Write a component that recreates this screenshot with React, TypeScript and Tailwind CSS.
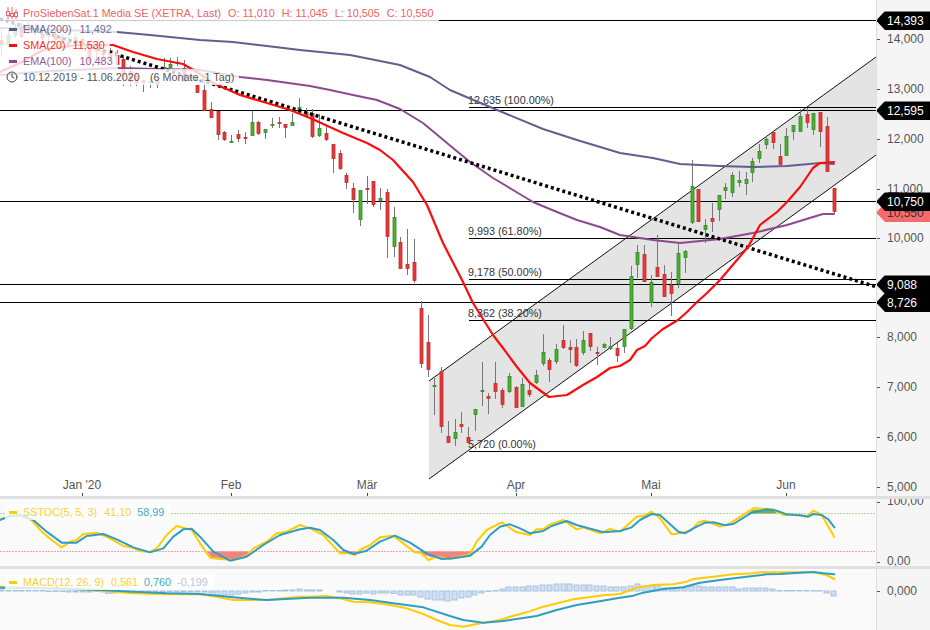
import { Clock } from "lucide-react";

type Candle = [number, number, number, number, number, "r" | "g"];
type Pt = [number, number];

// x, wick top, wick bottom, body top, body bottom, colour (pixel values read off the chart)
const candles: Candle[] = [
  [1, 30, 57, 40, 45, "r"], [8, 30, 46, 35, 45, "g"], [15, 24, 38, 30, 36, "g"], [21, 22, 38, 26, 37, "r"],
  [28, 22, 34, 26, 31, "r"], [35, 24, 36, 28, 33, "g"], [42, 26, 40, 33, 38, "r"], [48, 28, 42, 32, 36, "g"],
  [55, 30, 44, 34, 40, "r"], [62, 34, 46, 37, 42, "r"], [68, 36, 48, 42, 46, "g"], [75, 34, 46, 37, 42, "g"],
  [82, 36, 50, 39, 44, "r"], [89, 42, 64, 47, 62, "r"], [96, 44, 60, 48, 52, "g"], [103, 48, 62, 50, 55, "r"],
  [110, 48, 60, 50, 57, "r"], [117, 50, 66, 55, 65, "r"], [123, 56, 86, 59, 76, "r"], [130, 66, 86, 71, 82, "r"],
  [136, 72, 86, 75, 83, "r"], [143, 80, 92, 80, 83, "r"], [150, 78, 88, 81, 83, "g"], [157, 76, 88, 80, 85, "r"],
  [164, 58, 70, 67, 69, "g"], [170, 58, 70, 64, 68, "g"], [177, 57, 66, 62, 64, "r"], [184, 60, 82, 68, 82, "r"],
  [197, 85, 93, 85, 93, "r"], [204, 80, 111, 90, 111, "r"], [211, 102, 118, 109, 118, "r"],
  [218, 111, 140, 111, 135, "r"], [224, 131, 141, 132, 140, "r"], [231, 135, 143, 141, 142, "g"],
  [238, 130, 142, 134, 139, "r"], [245, 132, 144, 137, 139, "r"], [252, 111, 136, 122, 136, "g"],
  [258, 121, 135, 122, 134, "r"], [265, 129, 139, 129, 133, "g"], [272, 118, 128, 124, 126, "g"],
  [279, 117, 128, 122, 124, "r"], [285, 124, 138, 124, 128, "r"], [292, 113, 126, 122, 126, "g"],
  [299, 98, 113, 107, 113, "g"], [306, 108, 118, 112, 116, "r"], [312, 109, 138, 113, 137, "r"],
  [319, 114, 137, 128, 136, "g"], [326, 125, 141, 133, 140, "r"], [333, 144, 173, 144, 159, "r"],
  [340, 150, 170, 153, 169, "r"], [346, 173, 189, 175, 183, "r"], [353, 183, 213, 188, 200, "r"],
  [360, 190, 226, 190, 220, "g"], [367, 176, 204, 188, 190, "r"], [373, 181, 207, 181, 205, "r"],
  [380, 188, 210, 198, 201, "g"], [387, 189, 258, 192, 237, "r"], [394, 207, 257, 217, 247, "g"],
  [400, 237, 269, 242, 269, "r"], [407, 229, 275, 264, 269, "r"], [414, 239, 283, 262, 281, "r"],
  [421, 301, 368, 308, 364, "r"], [428, 315, 377, 342, 370, "r"], [434, 378, 415, 385, 387, "g"],
  [441, 367, 433, 371, 427, "r"], [448, 421, 443, 436, 443, "r"], [455, 419, 446, 432, 439, "g"],
  [461, 412, 433, 424, 427, "r"], [468, 427, 443, 437, 443, "r"], [475, 409, 431, 409, 415, "g"],
  [482, 362, 406, 390, 392, "g"], [488, 393, 414, 396, 399, "r"], [495, 362, 399, 383, 392, "r"],
  [502, 388, 408, 390, 405, "r"], [509, 373, 393, 376, 392, "g"], [516, 386, 408, 387, 408, "r"],
  [522, 378, 407, 384, 407, "g"], [529, 383, 397, 390, 395, "r"], [536, 370, 384, 375, 383, "g"],
  [543, 334, 366, 352, 364, "g"], [549, 358, 382, 360, 370, "r"], [556, 344, 364, 349, 362, "g"],
  [563, 325, 349, 340, 348, "r"], [570, 340, 363, 347, 350, "r"], [576, 339, 367, 347, 366, "r"],
  [583, 331, 355, 340, 353, "g"], [590, 333, 351, 333, 347, "r"], [597, 347, 365, 352, 354, "r"],
  [604, 343, 348, 344, 348, "g"], [610, 337, 350, 346, 349, "g"], [617, 343, 362, 348, 356, "r"],
  [624, 329, 353, 329, 347, "g"], [631, 266, 330, 276, 329, "g"], [637, 245, 278, 252, 265, "g"],
  [644, 245, 282, 254, 282, "r"], [651, 275, 307, 282, 303, "g"], [657, 235, 277, 267, 277, "r"],
  [664, 265, 297, 274, 297, "r"], [671, 272, 316, 285, 294, "r"], [678, 244, 288, 253, 284, "g"],
  [685, 250, 273, 251, 258, "g"], [692, 160, 224, 186, 223, "g"], [698, 189, 222, 189, 222, "r"],
  [705, 219, 243, 225, 230, "g"], [712, 203, 232, 218, 222, "r"], [719, 195, 221, 195, 210, "g"],
  [725, 183, 199, 187, 191, "g"], [732, 172, 197, 175, 193, "g"], [739, 171, 187, 180, 183, "g"],
  [746, 172, 195, 179, 184, "g"], [752, 158, 182, 161, 173, "g"], [759, 144, 163, 151, 159, "g"],
  [766, 136, 149, 139, 145, "g"], [773, 131, 149, 132, 143, "r"], [780, 144, 165, 156, 165, "r"],
  [786, 128, 156, 136, 156, "g"], [793, 126, 140, 125, 132, "g"], [800, 109, 132, 116, 132, "g"],
  [807, 108, 128, 114, 123, "r"], [813, 113, 135, 113, 130, "g"], [820, 112, 147, 112, 132, "r"],
  [827, 117, 172, 126, 172, "r"], [834, 188, 213, 188, 212, "r"],
];

const ema200: Pt[] = [
  [0, 28], [60, 30], [117, 32], [150, 35], [200, 40], [233, 42], [267, 46], [300, 50], [350, 55], [400, 65],
  [430, 77], [450, 90], [490, 107], [543, 129], [577, 140], [620, 153], [653, 158], [680, 164], [720, 166],
  [753, 167], [787, 166], [820, 163], [834, 164],
];
const ema100: Pt[] = [
  [0, 75], [50, 71], [117, 68], [200, 70], [240, 77], [267, 80], [310, 86], [330, 90], [353, 95], [377, 100],
  [400, 109], [423, 123], [453, 148], [470, 162], [493, 178], [513, 190], [533, 202], [557, 212], [577, 220],
  [600, 227], [620, 235], [653, 240], [680, 243], [720, 239], [753, 233], [787, 225], [813, 217], [823, 214],
  [834, 214],
];
const sma20: Pt[] = [
  [0, 72], [20, 63], [43, 50], [77, 45], [113, 45], [133, 52], [157, 59], [183, 64], [197, 72], [213, 83],
  [240, 95], [267, 103], [290, 110], [310, 118], [343, 133], [367, 143], [380, 150], [393, 160], [413, 182],
  [427, 205], [443, 243], [462, 280], [473, 303], [493, 335], [503, 348], [517, 367], [530, 383], [549, 397],
  [567, 395], [583, 385], [597, 377], [610, 368], [620, 366], [630, 360], [637, 350], [645, 346], [652, 338],
  [663, 329], [678, 320], [687, 312], [697, 302], [707, 293], [720, 280], [748, 247], [760, 225], [777, 212],
  [787, 202], [800, 187], [813, 168], [820, 163], [834, 162],
];

// lower panels were read in 3x crops, so their points stay in crop units
const crop = (ox: number, oy: number, pts: Pt[]): Pt[] => pts.map(([x, y]) => [ox + x / 3, oy + y / 3]);

const stocYellow = [
  ...crop(0, 490, [[0, 88], [30, 80], [60, 78], [95, 90], [125, 125], [155, 150], [185, 172], [210, 155], [230, 150], [250, 132], [290, 128], [330, 145], [370, 168], [395, 172], [420, 183], [450, 186], [470, 175], [500, 135], [530, 108], [575, 120], [600, 160], [630, 203], [660, 207], [700, 210], [740, 197], [760, 175], [800, 155], [830, 130], [860, 125], [900, 105], [930, 115]]),
  ...crop(310, 490, [[40, 135], [90, 190], [120, 190], [135, 195], [150, 180], [180, 165], [210, 142], [250, 137], [280, 160], [315, 187], [335, 190], [355, 210], [380, 200], [420, 207], [460, 197], [480, 192], [500, 155], [530, 120], [575, 97], [620, 127], [660, 135], [680, 118], [700, 118], [720, 103], [760, 90], [800, 118], [820, 112], [870, 130], [900, 117], [930, 125]]),
  ...crop(620, 490, [[50, 80], [70, 78], [95, 65], [120, 85], [155, 133], [190, 128], [215, 120], [235, 97], [255, 92], [300, 110], [330, 100], [400, 55], [460, 58], [490, 75], [540, 75], [560, 80], [580, 62], [605, 75], [625, 110], [643, 140]]),
];
const stocBlue = [
  ...crop(0, 490, [[0, 90], [30, 78], [60, 75], [100, 90], [140, 125], [185, 158], [230, 158], [260, 138], [310, 132], [350, 148], [400, 172], [450, 187], [490, 175], [520, 140], [550, 118], [575, 116], [600, 140], [640, 185], [690, 212], [740, 200], [790, 165], [840, 135], [900, 118], [930, 113]]),
  ...crop(310, 490, [[30, 120], [70, 150], [100, 180], [130, 192], [170, 182], [210, 155], [255, 137], [300, 158], [350, 190], [395, 207], [430, 205], [480, 197], [515, 170], [540, 135], [570, 110], [600, 103], [630, 115], [660, 130], [700, 123], [725, 108], [770, 93], [800, 105], [880, 127], [930, 123]]),
  ...crop(620, 490, [[35, 112], [60, 90], [95, 72], [120, 75], [175, 125], [195, 130], [220, 115], [255, 98], [280, 97], [315, 106], [340, 102], [395, 68], [440, 58], [470, 62], [500, 73], [550, 77], [565, 80], [580, 72], [605, 75], [625, 88], [643, 112]]),
];
const macdYellow = [
  ...crop(0, 490, [[0, 290], [50, 292], [200, 295], [300, 302], [400, 310], [500, 313], [600, 313], [650, 320], [700, 330], [800, 330], [900, 320], [930, 320]]),
  ...crop(310, 490, [[50, 318], [90, 325], [130, 335], [180, 337], [240, 345], [290, 355], [340, 372], [380, 390], [420, 405], [460, 410], [500, 402], [570, 390], [600, 380], [650, 367], [700, 350], [790, 328], [880, 316], [930, 312]]),
  ...crop(620, 490, [[50, 293], [100, 285], [160, 283], [200, 275], [220, 267], [280, 260], [340, 253], [400, 250], [420, 247], [580, 247], [620, 255], [643, 267]]),
];
const macdBlue = [
  ...crop(0, 490, [[0, 293], [100, 295], [200, 297], [300, 300], [400, 305], [500, 310], [600, 312], [700, 322], [800, 330], [930, 323]]),
  ...crop(310, 490, [[100, 323], [180, 330], [250, 340], [340, 352], [420, 378], [460, 390], [520, 398], [580, 393], [680, 378], [740, 360], [800, 345], [860, 335], [930, 323]]),
  ...crop(620, 490, [[40, 317], [70, 308], [130, 297], [190, 292], [240, 278], [300, 270], [380, 260], [440, 253], [480, 252], [540, 248], [580, 246], [610, 250], [643, 253]]),
];

// x, bar height from the zero line (positive = up)
const histogram: Pt[] = [
  [1, 1], [8, 1], [15, 0.5], [21, 0.5], [28, 0.5], [35, 0.5], [42, 0.5], [48, -0.5], [55, -0.5], [62, -0.5],
  [68, -1], [75, -1], [82, -1], [89, -1], [96, -0.5], [103, -1], [108, -2.5], [114, -2], [120, -1.5], [127, -1],
  [134, -1], [141, -1], [148, -1], [155, -1], [162, -1], [169, -1], [176, -1], [183, -1], [190, -1], [197, -1],
  [204, -1], [211, -2], [217, -4], [224, -4], [231, -4], [238, -3], [245, -2], [252, -1], [258, -1], [265, 0.5],
  [272, 0.5], [279, 0.5], [285, 1], [292, 1], [299, 2], [306, 1], [312, 1], [319, 1], [339, -1], [346, -2],
  [352, -3], [359, -3], [366, -2], [373, -3], [380, -2], [386, -2], [393, -2.5], [400, -4], [407, -4], [413, -4],
  [420, -6], [427, -8], [434, -9], [441, -9], [447, -10], [454, -9], [461, -7], [468, -6], [474, -4], [481, -2],
  [488, -0.5], [495, 0.5], [502, 2], [508, 4], [515, 4], [522, 4], [528, 5], [535, 5], [542, 6], [549, 6],
  [556, 7], [563, 7], [569, 7], [576, 6], [583, 6], [589, 6], [596, 5], [603, 5], [610, 4], [616, 4], [623, 4],
  [630, 5], [637, 7], [644, 5], [651, 5], [657, 5], [664, 3], [671, 3], [677, 3], [684, 3], [691, 5], [698, 5],
  [704, 4], [711, 4], [718, 4], [725, 4], [732, 4], [738, 2], [745, 3], [752, 3], [758, 3], [765, 3], [772, 2],
  [779, 0.5], [786, 0.5], [792, 0.5], [799, 0.5], [806, 0.5], [813, 0.3], [819, 0.3], [826, -2], [833, -5],
];

const priceTicks: [string, number][] = [
  ["14,000", 38.5], ["13,000", 88.5], ["12,000", 138.5], ["11,000", 188.5], ["10,000", 238], ["8,000", 337],
  ["7,000", 387], ["6,000", 437], ["5,000", 487],
];
const fullLines = [20, 110, 201, 284, 302];
const fibs: [string, number][] = [
  ["12,635 (100.00%)", 107], ["9,993 (61.80%)", 238], ["9,178 (50.00%)", 279], ["8,362 (38.20%)", 320],
  ["5,720 (0.00%)", 451],
];
const months: [string, number][] = [
  ["Jan '20", 82], ["Feb", 231], ["Mär", 367], ["Apr", 516], ["Mai", 651], ["Jun", 786],
];
const tags: [string, number][] = [["14,393", 20], ["12,595", 110], ["10,750", 201], ["9,088", 284], ["8,726", 302]];

const toPoints = (pts: Pt[]) => pts.map(([x, y]) => `${x},${y}`).join(" ");

function Series({ pts, color, width = 2 }: { pts: Pt[]; color: string; width?: number }) {
  return (
    <polyline
      points={toPoints(pts)}
      fill="none"
      stroke={color}
      strokeWidth={width}
      strokeLinejoin="round"
      strokeLinecap="round"
    />
  );
}

function Tick({ y }: { y: number }) {
  return <div className="absolute left-0 h-px w-[3px] bg-[#555]" style={{ top: y }} />;
}

function AxisLabel({ text, y }: { text: string; y: number }) {
  return (
    <div className="absolute left-[10px] -translate-y-1/2 leading-[10px]" style={{ top: y }}>
      {text}
    </div>
  );
}

function PriceTag({ text, y, red }: { text: string; y: number; red?: boolean }) {
  return (
    <div
      className={`absolute left-[-1px] flex h-[19px] w-[55px] -translate-y-1/2 items-center pl-[11px] [clip-path:polygon(9px_0,100%_0,100%_100%,9px_100%,0_50%)] ${
        red ? "bg-[#f86a6a] text-[#333]" : "bg-black text-white"
      }`}
      style={{ top: y + 0.5 }}
    >
      {text}
    </div>
  );
}

function Swatch({ color }: { color: string }) {
  return <span className={`mr-[6px] ml-[2px] h-[3px] w-[8px] ${color}`} />;
}

function MainPlot() {
  return (
    <div className="relative flex-1 overflow-hidden bg-white">
      <svg className="absolute inset-0" width={876} height={496} viewBox="0 0 876 496">
        <polygon points="429,381 876,57 876,155 429,479" fill="#e4e4e4" />
        <line x1={429} y1={381} x2={876} y2={57} stroke="#111" />
        <line x1={429} y1={479} x2={876} y2={155} stroke="#111" />

        {fullLines.map((y) => (
          <line key={y} x1={0} y1={y + 0.5} x2={876} y2={y + 0.5} stroke="#000" />
        ))}
        {fibs.map(([label, y]) => (
          <g key={label}>
            <line x1={469} y1={y + 0.5} x2={876} y2={y + 0.5} stroke="#000" />
            <text x={468} y={y - 3} fontSize={10.8} fill="#333">
              {label}
            </text>
          </g>
        ))}

        {candles.map(([x, wt, wb, bt, bb, c]) => (
          <g key={x}>
            <line x1={x + 0.5} y1={wt} x2={x + 0.5} y2={wb} stroke="#777" />
            <rect
              x={x - 1}
              y={bt + 0.5}
              width={3}
              height={Math.max(bb - bt - 1, 1)}
              fill={c === "r" ? "#e53a3a" : "#4fb02f"}
              stroke={c === "r" ? "#c42a2a" : "#2f8a2a"}
              strokeWidth={0.8}
            />
          </g>
        ))}

        <Series pts={ema200} color="#625f90" />
        <Series pts={ema100} color="#8c4a8e" />
        <line x1={0} y1={19} x2={877} y2={287} stroke="#000" strokeWidth={3.5} strokeDasharray="3 3" />
        <Series pts={sma20} color="#fb0d0d" width={2.2} />
      </svg>

      <div className="absolute top-[5px] left-0 flex flex-col items-start text-[10.8px] leading-4">
        <div className="flex h-4 items-center bg-white/80 pr-[5px] pl-[6px] text-[#f26060]">
          <svg width={12} height={12} viewBox="0 0 12 12" className="mr-[5px]" stroke="#f26060" fill="#fff">
            <path d="M2 0v12M6 0v12M10 2v10" />
            <rect x={0.5} y={4.5} width={3} height={4} />
            <rect x={4.5} y={6.5} width={3} height={3} />
            <rect x={8.5} y={5.5} width={3} height={4} />
          </svg>
          <span className="mr-[7px]">ProSiebenSat.1 Media SE (XETRA, Last)</span>
          <span className="mr-[7px]">O: 11,010</span>
          <span className="mr-[7px]">H: 11,045</span>
          <span className="mr-[7px]">L: 10,505</span>
          <span>C: 10,550</span>
        </div>
        <div className="flex h-4 items-center bg-white/80 pr-[5px] pl-[7px] text-[#6c6a92]">
          <Swatch color="bg-[#5f5c8c]" />
          <span className="mr-[8px]">EMA(200)</span>
          <span>11,492</span>
        </div>
        <div className="flex h-4 items-center bg-white/80 pr-[5px] pl-[7px] text-[#fb2b2b]">
          <Swatch color="bg-[#fb0d0d]" />
          <span className="mr-[7px]">SMA(20)</span>
          <span>11,530</span>
        </div>
        <div className="flex h-4 items-center bg-white/80 pr-[5px] pl-[7px] text-[#965a98]">
          <Swatch color="bg-[#8c4a8e]" />
          <span className="mr-[8px]">EMA(100)</span>
          <span>10,483</span>
        </div>
        <div className="flex h-4 items-center bg-white/80 pr-[5px] pl-[6px] text-[#555]">
          <Clock size={12} className="mr-[5px] text-[#444]" />
          <span className="mr-[10px]">10.12.2019 - 11.06.2020</span>
          <span>(6 Monate, 1 Tag)</span>
        </div>
      </div>

      {months.map(([label, x]) => (
        <div key={label}>
          <div className="absolute top-[478px] -translate-x-1/2 text-xs leading-[15px] text-[#555]" style={{ left: x }}>
            {label}
          </div>
          <div className="absolute top-[493px] h-[3px] w-px bg-[#444]" style={{ left: x }} />
        </div>
      ))}
    </div>
  );
}

function StochPlot() {
  return (
    <div className="relative flex-1 overflow-hidden bg-[#fafafa]">
      <svg className="absolute inset-0" width={876} height={67} viewBox="0 499 876 67">
        <line x1={0} y1={513.5} x2={876} y2={513.5} stroke="#b5d6a3" strokeDasharray="2 1" />
        <line x1={0} y1={551.5} x2={876} y2={551.5} stroke="#f3a7a7" strokeDasharray="2 1" />
        <polygon points="207,551.5 212,558 230,560 247,557 250,551.5" fill="#f08484" />
        <polygon points="338,551.5 341,553 355,555 360,551.5" fill="#f08484" />
        <polygon points="415,551.5 430,557 442,559 450,558 470,556 472,551.5" fill="#f08484" />
        <polygon points="748,513.5 753,510 770,509 778,513.5" fill="#76ac58" />
        <Series pts={stocYellow} color="#ffcc00" />
        <Series pts={stocBlue} color="#2e9fc2" />
      </svg>
      <div className="absolute top-[5px] left-[5px] flex h-4 items-center bg-white/80 pr-[6px] pl-[2px] text-[10.8px] leading-4">
        <Swatch color="bg-[#ffcc00]" />
        <span className="mr-[7px] text-[#f9cf3a]">SSTOC(5, 5, 3)</span>
        <span className="mr-[6px] text-[#f9cf3a]">41,10</span>
        <span className="text-[#45a8c8]">58,99</span>
      </div>
    </div>
  );
}

function MacdPlot() {
  return (
    <div className="relative flex-1 overflow-hidden bg-[#fafafa]">
      <svg className="absolute inset-0" width={876} height={61} viewBox="0 569 876 61">
        {histogram.map(([x, h]) => (
          <rect
            key={x}
            x={x - 2}
            y={h > 0 ? 591 - h : 591}
            width={5}
            height={Math.abs(h)}
            fill="#cde0f6"
            stroke="#a9c1dd"
          />
        ))}
        <Series pts={macdYellow} color="#ffcc00" />
        <Series pts={macdBlue} color="#2e9fc2" />
      </svg>
      <div className="absolute top-[5px] left-[5px] flex h-4 items-center bg-white/80 pr-[6px] pl-[2px] text-[10.8px] leading-4">
        <Swatch color="bg-[#ffcc00]" />
        <span className="mr-[7px] text-[#f9cf3a]">MACD(12, 26, 9)</span>
        <span className="mr-[6px] text-[#f9cf3a]">0,561</span>
        <span className="mr-[6px] text-[#45a8c8]">0,760</span>
        <span className="text-[#b4c6da]">-0,199</span>
      </div>
    </div>
  );
}

export default function App() {
  const axis = "relative w-[54px] shrink-0 overflow-hidden border-l border-[#ddd] bg-[#f5f5f5] text-xs text-[#555]";
  return (
    <div className="flex h-[630px] w-[930px] flex-col overflow-hidden bg-white font-['Liberation_Sans',Arial,sans-serif]">
      <div className="flex h-[496px]">
        <MainPlot />
        <div className={axis}>
          {priceTicks.map(([label, y]) => (
            <div key={label}>
              <Tick y={y} />
              <AxisLabel text={label} y={y} />
            </div>
          ))}
          <PriceTag text="10,550" y={212} red />
          {tags.map(([label, y]) => (
            <PriceTag key={label} text={label} y={y} />
          ))}
        </div>
      </div>
      <div className="h-[3px] bg-[#e0e0e0]" />
      <div className="flex h-[67px]">
        <StochPlot />
        <div className={axis}>
          <Tick y={3} />
          <AxisLabel text="100,00" y={2} />
          <Tick y={63} />
          <AxisLabel text="0,00" y={62} />
        </div>
      </div>
      <div className="h-[3px] bg-[#e0e0e0]" />
      <div className="flex h-[61px]">
        <MacdPlot />
        <div className={axis}>
          <Tick y={22} />
          <AxisLabel text="0,000" y={21.5} />
        </div>
      </div>
    </div>
  );
}
